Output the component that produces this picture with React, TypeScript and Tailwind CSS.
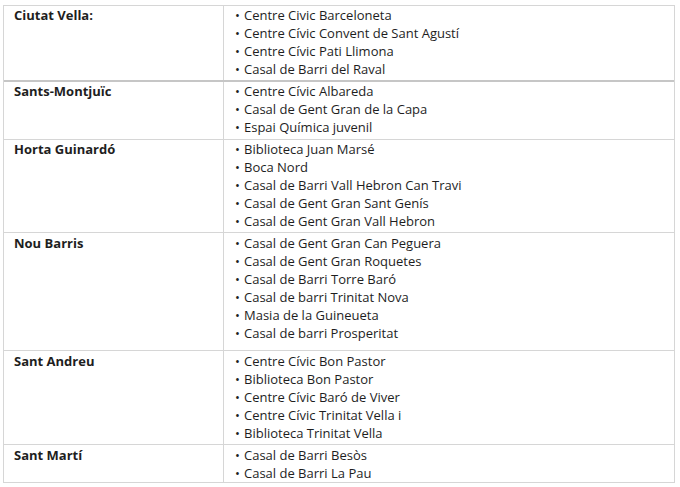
const rows: { name: string; items: string[]; pad: string; thick?: boolean }[] = [
  {
    name: 'Ciutat Vella:',
    items: ['Centre Civic Barceloneta', 'Centre Cívic Convent de Sant Agustí', 'Centre Cívic Pati Llimona', 'Casal de Barri del Raval'],
    pad: 'pt-0 pb-[2px]',
    thick: true,
  },
  {
    name: 'Sants-Montjuïc',
    items: ['Centre Cívic Albareda', 'Casal de Gent Gran de la Capa', 'Espai Química juvenil'],
    pad: 'pt-0 pb-[3px]',
  },
  {
    name: 'Horta Guinardó',
    items: ['Biblioteca Juan Marsé', 'Boca Nord', 'Casal de Barri Vall Hebron Can Travi', 'Casal de Gent Gran Sant Genís', 'Casal de Gent Gran Vall Hebron'],
    pad: 'pt-0 pb-[2px]',
  },
  {
    name: 'Nou Barris',
    items: ['Casal de Gent Gran Can Peguera', 'Casal de Gent Gran Roquetes', 'Casal de Barri Torre Baró', 'Casal de barri Trinitat Nova', 'Masia de la Guineueta', 'Casal de barri Prosperitat'],
    pad: 'pt-[1px] pb-[8px]',
  },
  {
    name: 'Sant Andreu',
    items: ['Centre Cívic Bon Pastor', 'Biblioteca Bon Pastor', 'Centre Cívic Baró de Viver', 'Centre Cívic Trinitat Vella i', 'Biblioteca Trinitat Vella'],
    pad: 'pt-[1px] pb-[2px]',
  },
  {
    name: 'Sant Martí',
    items: ['Casal de Barri Besòs', 'Casal de Barri La Pau'],
    pad: 'pt-[1px] pb-0',
  },
];

export default function App() {
  return (
    <div className="w-[680px] h-[487px] bg-white pt-[5px] pl-[3px] text-[#1e1e1e] text-[13px] leading-[18px]" style={{ fontFamily: '"Open Sans", "Liberation Sans", sans-serif' }}>
      <div className="w-[672px] border border-[#d6d6d6]">
        {rows.map((r, i) => (
          <div
            key={r.name}
            className={`grid grid-cols-[220px_1fr] ${i === rows.length - 1 ? '' : r.thick ? 'border-b-2 border-[#c6c6c6]' : 'border-b border-[#d6d6d6]'}`}
          >
            <div className={`border-r border-[#d6d6d6] pl-[10px] font-bold ${r.pad}`}>{r.name}</div>
            <ul className={`pl-[11px] ${r.pad}`}>
              {r.items.map((it) => (
                <li key={it} className="flex">
                  <span className="w-[9px] shrink-0">•</span>
                  <span>{it}</span>
                </li>
              ))}
            </ul>
          </div>
        ))}
      </div>
    </div>
  );
}
